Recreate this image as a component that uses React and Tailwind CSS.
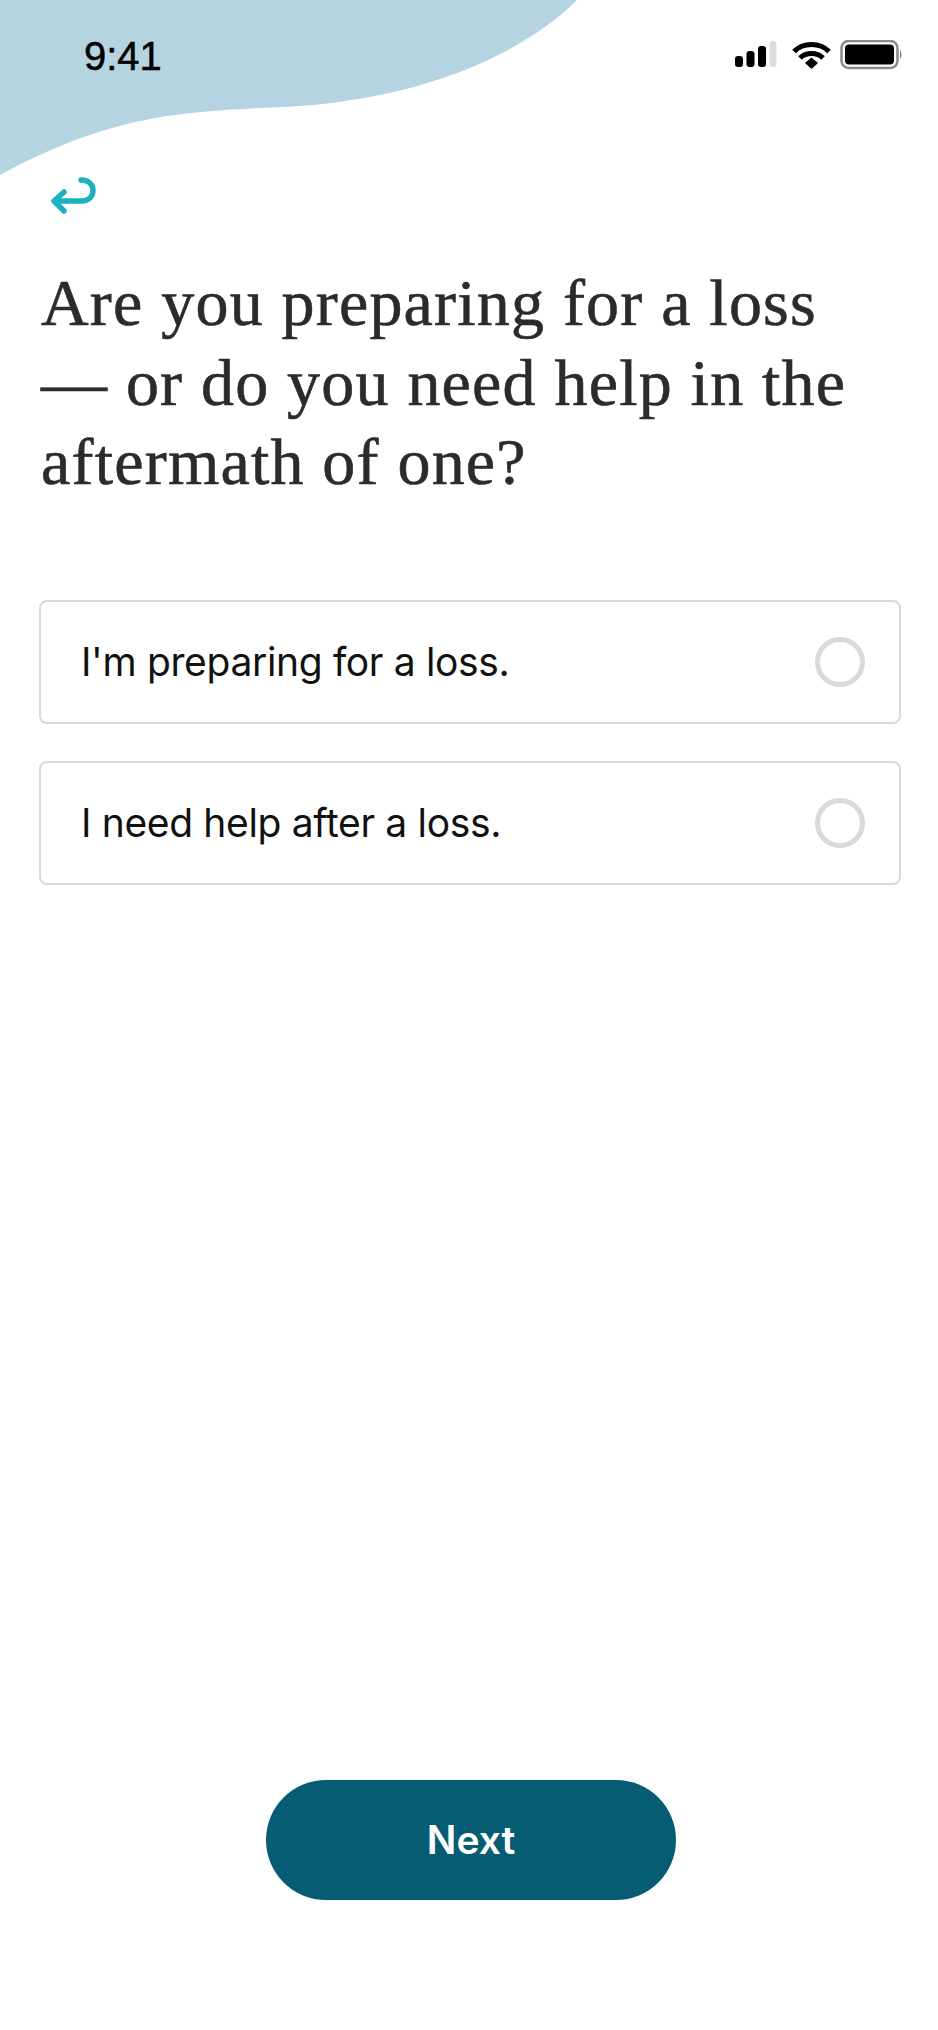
import React from 'react';

const Radio = () => (
  <span className="w-[50px] h-[50px] rounded-full border-[5px] border-[#d9d9d9] shrink-0"></span>
);

const Option = ({ label }) => (
  <div className="h-[124px] flex items-center justify-between pl-[40px] pr-[34px] rounded-[8px] border-2 border-[#d9d9d9] bg-white">
    <span className="font-['Inter',sans-serif] text-[39px] leading-none text-[#111] tracking-[-0.35px]">{label}</span>
    <Radio />
  </div>
);

const StatusIcons = () => (
  <div className="flex items-center">
    <svg width="168" height="32" viewBox="0 0 168 32" className="block">
      {/* signal */}
      <rect x="0" y="16" width="8" height="11" rx="3" fill="#000" />
      <rect x="11.5" y="11" width="8" height="16" rx="3" fill="#000" />
      <rect x="23" y="6" width="8" height="21" rx="3" fill="#000" />
      <rect x="34.5" y="1" width="7" height="26" rx="3" fill="#ddd" />
      {/* wifi */}
      <path d="M59 11.5 C68 2 85 2 94 11.5" fill="none" stroke="#000" strokeWidth="5" />
      <path d="M65 18 C71 12 82 12 88 18" fill="none" stroke="#000" strokeWidth="5" />
      <path d="M70 23 L76.5 17.5 L83 23 L76.5 29 Z" fill="#000" />
      {/* battery */}
      <rect x="106.5" y="1" width="56" height="27" rx="7" fill="none" stroke="#8a8a8a" strokeWidth="2.5" />
      <rect x="110" y="4.5" width="49" height="20" rx="4" fill="#000" />
      <path d="M165 10 C167 11 167 18 165 19 Z" fill="#8a8a8a" />
    </svg>
  </div>
);

export default function App() {
  return (
    <div className="relative w-[938px] h-[2030px] bg-white overflow-hidden flex flex-col font-['Lato',sans-serif]">
      {/* top wave */}
      <svg className="absolute top-0 left-0" width="938" height="200" viewBox="0 0 938 200">
        <path
          d="M0 0 H577 C525 52 430 96 300 106 C190 112 120 110 0 175 Z"
          fill="#b5d3e0"
        />
      </svg>

      <div className="relative flex items-center justify-between h-[112px] pl-[84px] pr-[35px]">
        <span className="font-['Liberation_Sans',sans-serif] font-medium text-[40px] leading-none text-black [-webkit-text-stroke:0.5px_#000]">9:41</span>
        <StatusIcons />
      </div>

      <div className="relative pl-[50px] pt-[65px]">
        <svg width="46" height="38" viewBox="0 0 46 38" fill="none" stroke="#1cb0c3" strokeWidth="5.5" strokeLinecap="round" strokeLinejoin="round" className="block">
          <path d="M31 3 C38 3 43 7 43 13 C43 20 38 24 31 24 H5" />
          <path d="M14 15 L4 24 L14 34" />
        </svg>
      </div>

      <h1 className="relative mt-[48px] px-[41px] font-['Liberation_Serif',serif] font-normal text-[66px] leading-[79.5px] tracking-[1.2px] text-[#2b2b2b] [-webkit-text-stroke:0.6px_#2b2b2b]">
        Are you preparing for a loss
        <br />
        — or do you need help in the
        <br />
        aftermath of one?
      </h1>

      <div className="mt-[98px] ml-[39px] w-[862px] flex flex-col gap-[37px]">
        <Option label="I'm preparing for a loss." />
        <Option label="I need help after a loss." />
      </div>

      <div className="mt-auto mb-[130px] pl-[4px] flex justify-center">
        <button className="w-[410px] h-[120px] rounded-full bg-[#055c73] text-white font-['Inter',sans-serif] font-semibold text-[39px]">
          Next
        </button>
      </div>
    </div>
  );
}
